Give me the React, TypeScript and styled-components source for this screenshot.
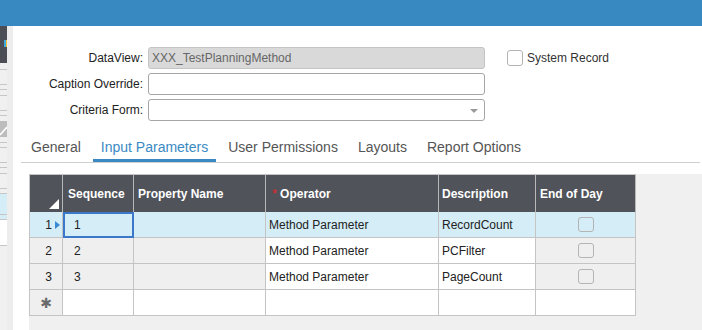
import React from 'react';
import styled, { createGlobalStyle } from 'styled-components';

const GlobalStyle = createGlobalStyle`
  html, body {
    margin: 0;
    padding: 0;
  }
  body {
    font-family: 'Liberation Sans', Arial, sans-serif;
    background: #fff;
  }
`;

const Page = styled.div`
  width: 702px;
  height: 330px;
  overflow: hidden;
  display: flex;
  flex-direction: column;
`;

const TopBar = styled.div`
  flex: none;
  height: 26px;
  background: #3889c2;
`;

const Body = styled.div`
  flex: 1;
  display: flex;
  min-height: 0;
`;

const SideStrip = styled.div`
  flex: none;
  width: 7px;
  display: flex;
  flex-direction: column;
  background: #f0f0f0;
`;

const SideDark = styled.div`
  height: 37px;
  background: #4b4e55;
  display: flex;
  align-items: flex-start;
  justify-content: flex-end;
  padding-top: 14px;
  box-sizing: border-box;
`;

const SideGlyph = styled.span`
  width: 3px;
  height: 7px;
  background: linear-gradient(to right, #3fa9e0 0 2px, #f2c230 2px);
`;

const SideSeg = styled.div<{ $h: number; $bg?: string; $line?: boolean }>`
  flex: none;
  height: ${({ $h }) => $h}px;
  box-sizing: border-box;
  background: ${({ $bg }) => $bg || 'transparent'};
  border-bottom: ${({ $line }) => ($line ? '1px solid #c6c6c6' : 'none')};
`;

const Gutter = styled.div`
  flex: none;
  width: 6px;
  background: #ededed;
`;

const Main = styled.div`
  flex: 1;
  display: flex;
  flex-direction: column;
  padding-top: 21px;
  background: #fff;
  min-width: 0;
`;

const Form = styled.div`
  display: grid;
  grid-template-columns: 130px 337px auto;
  grid-auto-rows: 22px;
  column-gap: 5px;
  row-gap: 4px;
`;

const Label = styled.label`
  align-self: center;
  text-align: right;
  font-size: 12px;
  color: #222;
`;

const Field = styled.div<{ $readOnly?: boolean }>`
  position: relative;
  box-sizing: border-box;
  height: 22px;
  border: 1px solid ${({ $readOnly }) => ($readOnly ? '#c4c4c4' : '#a6a6a6')};
  border-radius: 3px;
  background: ${({ $readOnly }) => ($readOnly ? '#d9d9d9' : '#fff')};
  padding: 0 3px;
  display: flex;
  align-items: center;
  font-size: 12px;
  color: #666;
`;

const SelectArrow = styled.span`
  position: absolute;
  right: 6px;
  top: 9px;
  border-left: 4px solid transparent;
  border-right: 4px solid transparent;
  border-top: 4px solid #9a9a9a;
`;

const CheckRow = styled.div`
  display: flex;
  align-items: center;
  gap: 4px;
  margin-left: 17px;
  font-size: 12px;
  color: #333;
`;

const CheckBox = styled.span<{ $size?: number }>`
  display: inline-block;
  box-sizing: border-box;
  width: 16px;
  height: ${({ $size }) => $size || 16}px;
  border: 1px solid #b4b4b4;
  border-radius: 3px;
`;

const TabBar = styled.div`
  display: flex;
  margin: 16px 2px 0 8px;
  padding-left: 2px;
  border-bottom: 1px solid #cfcfcf;
`;

const Tab = styled.div<{ $active?: boolean }>`
  font-size: 14px;
  line-height: 20px;
  padding: 0 8px 2px;
  margin-right: 4px;
  color: ${({ $active }) => ($active ? '#3a89c3' : '#555')};
  border-bottom: 3px solid ${({ $active }) => ($active ? '#3a89c3' : 'transparent')};
`;

const GridArea = styled.div`
  flex: 1;
  margin: 11px 0 0 16px;
  background: #f0f0f0;
`;

const Table = styled.div`
  display: grid;
  grid-template-columns: 33px 71px 132px 173px 97px 100px;
  width: max-content;
  border-top: 1px solid #c4c4c4;
  border-left: 1px solid #c4c4c4;
`;

const HeadCell = styled.div<{ $pad?: number }>`
  box-sizing: border-box;
  height: 37px;
  background: #505359;
  border-right: 1px solid #b8b8b8;
  color: #fff;
  font-weight: bold;
  font-size: 12px;
  display: flex;
  align-items: center;
  padding-left: ${({ $pad }) => ($pad ?? 4)}px;
`;

const CornerCell = styled(HeadCell)`
  align-items: flex-end;
  justify-content: flex-end;
  padding: 0 3px 3px 0;
`;

const CornerMark = styled.span`
  width: 0;
  height: 0;
  border-left: 10px solid transparent;
  border-bottom: 10px solid #fff;
`;

const Required = styled.span`
  color: #e0262a;
  font-weight: normal;
  font-size: 13px;
  margin-right: 3px;
`;

type Tone = 'selected' | 'readonly' | 'plain';

const toneBg: Record<Tone, string> = {
  selected: '#d4edf7',
  readonly: '#efefef',
  plain: '#fff',
};

const Cell = styled.div<{ $tone: Tone; $focus?: boolean; $pad?: number; $center?: boolean }>`
  box-sizing: border-box;
  height: 26px;
  border-right: 1px solid #c4c4c4;
  border-bottom: 1px solid #c4c4c4;
  background: ${({ $tone }) => toneBg[$tone]};
  display: flex;
  align-items: center;
  justify-content: ${({ $center }) => ($center ? 'center' : 'flex-start')};
  padding-left: ${({ $pad }) => ($pad ?? 3)}px;
  font-size: 12px;
  color: #222;
  outline: ${({ $focus }) => ($focus ? '2px solid #3b78c9' : 'none')};
  outline-offset: -2px;
`;

const RowHead = styled(Cell)`
  justify-content: flex-end;
  padding: 0 2px 0 0;
`;

const RowArrow = styled.span<{ $show?: boolean }>`
  width: 0;
  height: 0;
  margin-left: 3px;
  border-top: 4px solid transparent;
  border-bottom: 4px solid transparent;
  border-left: 5px solid ${({ $show }) => ($show ? '#3a8ad3' : 'transparent')};
`;

const NewRowMark = styled(Cell)`
  justify-content: center;
  padding: 0;
  color: #6a6a6a;
  font-family: 'DejaVu Sans', sans-serif;
  font-size: 14px;
`;

const sideSegs = [
  { h: 7, line: true },
  { h: 15, line: true },
  { h: 5, line: true },
  { h: 6, line: true },
  { h: 15, line: true },
  { h: 5, line: true },
  { h: 5 },
];

const sideSegs2 = [
  { h: 6, line: true },
  { h: 5, line: true },
  { h: 15, line: true },
  { h: 5, line: true },
  { h: 6, line: true },
  { h: 15, line: true },
  { h: 5, line: true },
  { h: 21, line: true, bg: '#d4edf7' },
  { h: 5, line: true, bg: '#d4edf7' },
  { h: 26, line: true, bg: '#fff' },
];

const rows = [
  { n: 1, op: 'Method Parameter', desc: 'RecordCount' },
  { n: 2, op: 'Method Parameter', desc: 'PCFilter' },
  { n: 3, op: 'Method Parameter', desc: 'PageCount' },
];

const tabs = ['General', 'Input Parameters', 'User Permissions', 'Layouts', 'Report Options'];

export default function App() {
  return (
    <Page>
      <GlobalStyle />
      <TopBar />
      <Body>
        <SideStrip>
          <SideDark>
            <SideGlyph />
          </SideDark>
          {sideSegs.map((s, i) => (
            <SideSeg key={i} $h={s.h} $line={s.line} />
          ))}
          <svg width="7" height="16" viewBox="0 0 7 16" style={{ flex: 'none', display: 'block' }}>
            <rect width="7" height="16" fill="#bdbdbd" />
            <line x1="0" y1="14" x2="7" y2="6" stroke="#fff" strokeWidth="1.5" />
          </svg>
          {sideSegs2.map((s, i) => (
            <SideSeg key={i} $h={s.h} $line={s.line} $bg={s.bg} />
          ))}
        </SideStrip>
        <Gutter />
        <Main>
          <Form>
            <Label>DataView:</Label>
            <Field $readOnly>XXX_TestPlanningMethod</Field>
            <CheckRow>
              <CheckBox />
              System Record
            </CheckRow>
            <Label>Caption Override:</Label>
            <Field />
            <span />
            <Label>Criteria Form:</Label>
            <Field>
              <SelectArrow />
            </Field>
          </Form>

          <TabBar>
            {tabs.map((t) => (
              <Tab key={t} $active={t === 'Input Parameters'}>{t}</Tab>
            ))}
          </TabBar>

          <GridArea>
            <Table>
              <CornerCell>
                <CornerMark />
              </CornerCell>
              <HeadCell $pad={5}>Sequence</HeadCell>
              <HeadCell>Property Name</HeadCell>
              <HeadCell $pad={6}><Required>*</Required>Operator</HeadCell>
              <HeadCell $pad={3}>Description</HeadCell>
              <HeadCell>End of Day</HeadCell>

              {rows.map((r, i) => {
                const sel = i === 0;
                const ro: Tone = sel ? 'selected' : 'readonly';
                const ed: Tone = sel ? 'selected' : 'plain';
                return (
                  <React.Fragment key={r.n}>
                    <RowHead $tone={ro}>
                      {r.n}
                      <RowArrow $show={sel} />
                    </RowHead>
                    <Cell $tone={ro} $pad={11} $focus={sel}>{r.n}</Cell>
                    <Cell $tone={ro} />
                    <Cell $tone={ed}>{r.op}</Cell>
                    <Cell $tone={ed}>{r.desc}</Cell>
                    <Cell $tone={ro} $pad={0} $center>
                      <CheckBox $size={15} />
                    </Cell>
                  </React.Fragment>
                );
              })}

              <NewRowMark $tone="readonly">✱</NewRowMark>
              <Cell $tone="plain" />
              <Cell $tone="plain" />
              <Cell $tone="plain" />
              <Cell $tone="plain" />
              <Cell $tone="plain" />
            </Table>
          </GridArea>
        </Main>
      </Body>
    </Page>
  );
}
